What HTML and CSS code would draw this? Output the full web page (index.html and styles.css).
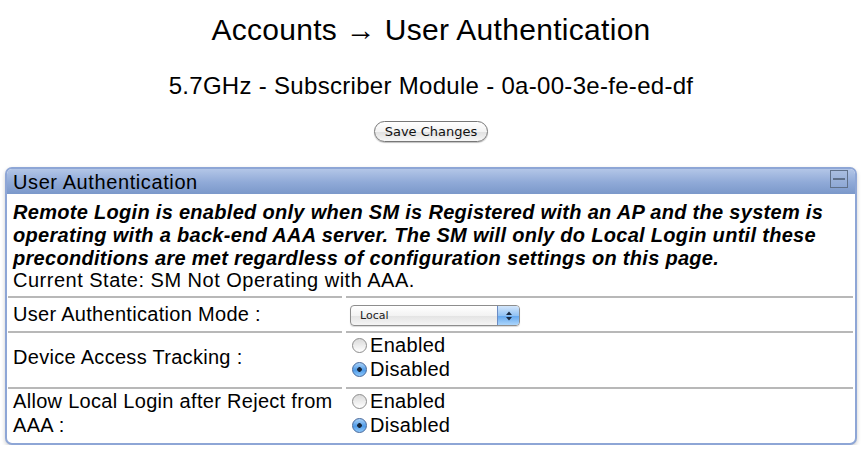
FILE: index.html
```html
<!DOCTYPE html>
<html lang="en">
<head>
    <meta charset="UTF-8">
    <title>Accounts - User Authentication</title>
    <link rel="stylesheet" href="styles.css">
</head>
<body>
    <h1 class="page-title">Accounts &rarr; User Authentication</h1>
    <h2 class="device-name">5.7GHz - Subscriber Module - 0a-00-3e-fe-ed-df</h2>

    <div class="actions">
        <button type="button" class="btn">Save Changes</button>
    </div>

    <div class="panel">
        <div class="panel-header">
            <span class="panel-title">User Authentication</span>
            <span class="collapse-btn"></span>
        </div>
        <div class="panel-body">
            <p class="notice">Remote Login is enabled only when SM is Registered with an AP and the system is<br>operating with a back-end AAA server. The SM will only do Local Login until these<br>preconditions are met regardless of configuration settings on this page.</p>
            <p class="state">Current State: SM Not Operating with AAA.</p>

            <table class="settings">
                <tr class="mode-row">
                    <td class="label">User Authentication Mode :</td>
                    <td class="value">
                        <span class="select">
                            <span class="select-text">Local</span>
                            <span class="select-arrows">
                                <svg width="8" height="12" viewBox="0 0 8 12">
                                    <path d="M4 1.5 L7 5 L1 5 Z" fill="#1a2a40"/>
                                    <path d="M4 10.5 L7 7 L1 7 Z" fill="#1a2a40"/>
                                </svg>
                            </span>
                        </span>
                    </td>
                </tr>
                <tr>
                    <td class="label">Device Access Tracking :</td>
                    <td class="value">
                        <label class="radio"><input type="radio" name="tracking">Enabled</label>
                        <label class="radio"><input type="radio" name="tracking" checked>Disabled</label>
                    </td>
                </tr>
                <tr>
                    <td class="label">Allow Local Login after Reject from AAA :</td>
                    <td class="value">
                        <label class="radio"><input type="radio" name="fallback">Enabled</label>
                        <label class="radio"><input type="radio" name="fallback" checked>Disabled</label>
                    </td>
                </tr>
            </table>
        </div>
    </div>
</body>
</html>
```

FILE: styles.css
```css
body {
    margin: 0;
    padding: 0 8px 0 5px;
    font-family: "Liberation Sans", Arial, sans-serif;
    color: #000000;
    background: #ffffff;
}

.page-title {
    margin: 0;
    padding-top: 12px;
    text-align: center;
    font-size: 30px;
    font-weight: normal;
    letter-spacing: 0.3px;
    line-height: 36px;
}

.device-name {
    margin: 0;
    padding-top: 23px;
    text-align: center;
    font-size: 24px;
    font-weight: normal;
    letter-spacing: 0.3px;
    line-height: 30px;
}

.actions {
    display: flex;
    justify-content: center;
    margin-top: 20px;
}

.btn {
    font-family: "DejaVu Sans", sans-serif;
    font-size: 13px;
    color: #111111;
    height: 21px;
    padding: 0 10px;
    border: 1px solid #777777;
    border-radius: 11px;
    background: linear-gradient(#ffffff, #f3f3f3 50%, #e0e0e0 51%, #f7f7f7);
    box-shadow: 0 1px 1px rgba(0, 0, 0, 0.25);
}

.panel {
    margin-top: 25px;
    border: 2px solid #8ea6d6;
    border-radius: 7px;
    background: #ffffff;
    box-shadow: 0 2px 4px rgba(0, 0, 0, 0.2);
    overflow: hidden;
}

.panel-header {
    display: flex;
    justify-content: space-between;
    align-items: flex-start;
    height: 25px;
    padding: 0 7px 0 6px;
    background: linear-gradient(#b3c6e7, #8fa9d7 55%, #7b98ca);
}

.panel-title {
    font-size: 20px;
    letter-spacing: 0.6px;
    line-height: 26px;
}

.collapse-btn {
    position: relative;
    width: 16px;
    height: 16px;
    margin-top: 1px;
    border: 1px solid #5f7089;
    background: linear-gradient(#a9bddf, #8ea8d5);
}

.collapse-btn::after {
    content: "";
    position: absolute;
    left: 2px;
    right: 2px;
    top: 7px;
    height: 2px;
    background: #5f7089;
}

.panel-body {
    padding: 0 0 0 1px;
    font-size: 20px;
    letter-spacing: 0.3px;
}

.notice {
    margin: 0;
    padding: 7px 0 0 5px;
    font-weight: bold;
    font-style: italic;
    line-height: 23px;
}

.state {
    margin: 0 0 6px;
    padding-left: 5px;
    letter-spacing: 0.5px;
    line-height: 20px;
}

.settings {
    border-collapse: separate;
    border-spacing: 4px 0;
    margin: 0 -4px;
    width: calc(100% + 6px);
}

.settings td {
    box-sizing: border-box;
    border-top: 2px solid #b8b8b8;
    padding: 0 0 6px;
    line-height: 24px;
}

.settings .label {
    width: 334px;
    padding-left: 5px;
    vertical-align: middle;
}

.settings .value {
    padding-left: 4px;
    vertical-align: top;
}

.mode-row td {
    padding-top: 4px;
    padding-bottom: 5px;
}

.select {
    display: inline-flex;
    align-items: stretch;
    width: 168px;
    height: 19px;
    border: 1px solid #8d8d8d;
    border-radius: 4px;
    background: linear-gradient(#ffffff, #f3f3f3 50%, #e3e3e3 51%, #f5f5f5);
    box-shadow: 0 1px 1px rgba(0, 0, 0, 0.15);
    overflow: hidden;
    vertical-align: middle;
    letter-spacing: 0;
}

.select-text {
    flex: 1;
    padding-left: 9px;
    font-family: "DejaVu Sans", sans-serif;
    font-size: 11px;
    color: #222222;
    line-height: 19px;
}

.select-arrows {
    display: flex;
    align-items: center;
    justify-content: center;
    width: 21px;
    border-left: 1px solid #6b8cc4;
    background: linear-gradient(#d3e6fb, #93c3f4 50%, #62a6ee 51%, #abd5fb);
}

.radio {
    display: flex;
    align-items: center;
}

.radio input {
    appearance: none;
    -webkit-appearance: none;
    width: 15px;
    height: 15px;
    margin: 0 3px 0 2px;
    border: 1px solid #8c8c8c;
    border-radius: 50%;
    background: linear-gradient(#dadada, #ffffff);
}

.radio input:checked {
    border-color: #46679a;
    background: radial-gradient(circle, #17263a 0, #17263a 2px, transparent 2.6px),
                linear-gradient(#aad2f8, #4f9be8 55%, #90c9fb);
}
```
